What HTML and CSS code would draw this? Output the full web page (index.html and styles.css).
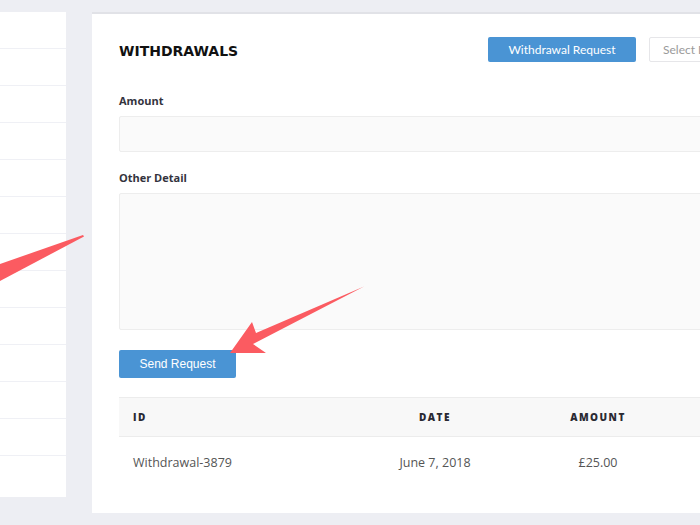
FILE: index.html
```html
<!DOCTYPE html>
<html>
<head>
<meta charset="utf-8">
<link rel="stylesheet" href="styles.css">
</head>
<body>
<div class="page">
  <aside class="sidebar">
    <div class="side-row"></div><div class="side-row"></div><div class="side-row"></div>
    <div class="side-row"></div><div class="side-row"></div><div class="side-row"></div>
    <div class="side-row"></div><div class="side-row"></div><div class="side-row"></div>
    <div class="side-row"></div><div class="side-row"></div><div class="side-row"></div>
    <div class="side-row last"></div>
  </aside>
  <main class="card">
    <div class="card-head">
      <h1 class="title">WITHDRAWALS</h1>
      <div class="head-actions">
        <button class="btn btn-primary btn-head">Withdrawal Request</button>
        <button class="btn btn-light">Select D</button>
      </div>
    </div>
    <div class="field">
      <label class="label">Amount</label>
      <div class="input"></div>
    </div>
    <div class="field field-detail">
      <label class="label">Other Detail</label>
      <div class="textarea"></div>
    </div>
    <button class="btn btn-primary btn-send">Send Request</button>
    <div class="table">
      <div class="t-row t-head">
        <div class="c c-id">ID</div>
        <div class="c c-date">DATE</div>
        <div class="c c-amount">AMOUNT</div>
        <div class="c c-status"></div>
      </div>
      <div class="t-row t-body">
        <div class="c c-id">Withdrawal-3879</div>
        <div class="c c-date">June 7, 2018</div>
        <div class="c c-amount">£25.00</div>
        <div class="c c-status"></div>
      </div>
    </div>
  </main>
</div>
<svg class="arrows" width="700" height="525" viewBox="0 0 700 525">
  <polygon points="83,235 0,264 0,281 84,236.5" fill="#fb5b61"/>
  <polygon points="230,353 252,322 256,333 364,286.5 253,344 266,353" fill="#fb5b61"/>
</svg>
</body>
</html>
```
FILE: styles.css
```css
html, body {
  margin: 0;
  padding: 0;
}
body {
  width: 700px;
  height: 525px;
  overflow: hidden;
  background: #edeef3;
  position: relative;
  font-family: "Open Sans", sans-serif;
}
.page {
  display: flex;
  align-items: flex-start;
  gap: 26px;
  padding-top: 12px;
  width: 800px;
}
.sidebar {
  width: 66px;
  height: 485px;
  background: #fff;
  flex-shrink: 0;
  display: flex;
  flex-direction: column;
}
.side-row {
  height: 36px;
  border-bottom: 1px solid #eff0f5;
  flex-shrink: 0;
}
.side-row.last {
  border-bottom: none;
  flex: 1;
}
.card {
  width: 672px;
  height: 501px;
  background: #fff;
  border-top: 2px solid #e1e2e7;
  padding: 23px 27px 0 27px;
  box-sizing: border-box;
  flex-shrink: 0;
}
.card-head {
  display: flex;
  align-items: center;
  height: 25px;
}
.title {
  margin: 0;
  font-family: "DejaVu Sans", sans-serif;
  font-weight: 700;
  font-size: 14px;
  color: #111;
  padding-top: 3px;
}
.head-actions {
  margin-left: auto;
  display: flex;
  gap: 13px;
}
.btn {
  border: none;
  margin: 0;
  padding: 0;
  cursor: pointer;
  border-radius: 2px;
  font-family: "Lato", sans-serif;
  font-size: 12px;
}
.btn-primary {
  background: #4a94d4;
  color: #fff;
}
.btn-head {
  width: 148px;
  height: 25px;
}
.btn-light {
  width: 88px;
  height: 25px;
  background: #fff;
  border: 1px solid #e6e6e9;
  color: #9a9a9a;
  text-align: left;
  padding-left: 13px;
  box-sizing: border-box;
}
.field {
  margin-top: 31px;
  display: flex;
  flex-direction: column;
}
.field-detail {
  margin-top: 18px;
}
.label {
  font-family: "Open Sans", sans-serif;
  font-weight: 700;
  font-size: 11px;
  line-height: 16px;
  color: #33333d;
  margin-bottom: 7px;
}
.input {
  height: 36px;
  background: #fafafa;
  border: 1px solid #ededed;
  border-radius: 2px;
  box-sizing: border-box;
}
.textarea {
  height: 137px;
  background: #fafafa;
  border: 1px solid #ededed;
  border-radius: 2px;
  box-sizing: border-box;
}
.btn-send {
  display: block;
  margin-top: 20px;
  width: 117px;
  height: 28px;
  font-family: "Liberation Sans", Arial, sans-serif;
  font-size: 12px;
}
.table {
  margin-top: 19px;
}
.t-row {
  display: flex;
  align-items: center;
}
.t-head {
  height: 40px;
  background: #f8f8f8;
  border-top: 1px solid #ececec;
  border-bottom: 1px solid #ececec;
  box-sizing: border-box;
  font-weight: 800;
  font-size: 10px;
  letter-spacing: 1.5px;
  color: #2a2a33;
}
.t-body {
  height: 50px;
  font-size: 12.5px;
  color: #555;
}
.c-id {
  width: 237px;
  padding-left: 14px;
}
.c-date {
  width: 130px;
  text-align: center;
}
.c-amount {
  width: 196px;
  text-align: center;
}
.c-status {
  flex: 1;
}
.arrows {
  position: absolute;
  left: 0;
  top: 0;
  pointer-events: none;
}
```
